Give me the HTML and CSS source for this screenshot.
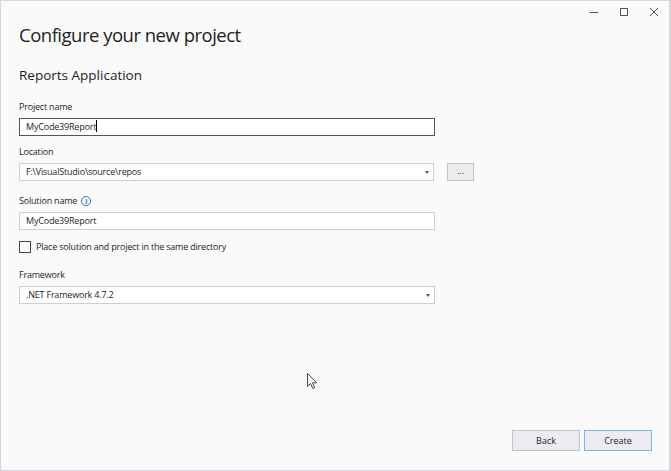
FILE: index.html
```html
<!DOCTYPE html>
<html>
<head>
<meta charset="utf-8">
<link rel="stylesheet" href="styles.css">
</head>
<body>
<div class="window">
  <div class="titlebar">
    <span class="ctl"><svg width="10" height="10" viewBox="0 0 10 10"><path d="M0.5 5.5H9.5" stroke="#555" stroke-width="1"/></svg></span>
    <span class="ctl"><svg width="10" height="10" viewBox="0 0 10 10"><rect x="1.5" y="1.5" width="7" height="7" fill="none" stroke="#555" stroke-width="1"/></svg></span>
    <span class="ctl"><svg width="10" height="10" viewBox="0 0 10 10"><path d="M1 1L9 9M9 1L1 9" stroke="#555" stroke-width="1"/></svg></span>
  </div>
  <div class="content">
    <h1 class="title">Configure your new project</h1>
    <h2 class="subtitle">Reports Application</h2>

    <div class="label l-project">Project name</div>
    <div class="field focused">MyCode39Report<span class="caret"></span></div>

    <div class="label l-loc">Location</div>
    <div class="row">
      <div class="field combo">F:\VisualStudio\source\repos<span class="arrow"></span></div>
      <div class="browse">...</div>
    </div>

    <div class="label l-sol">Solution name <span class="info">i</span></div>
    <div class="field">MyCode39Report</div>

    <label class="check"><span class="box"></span>Place solution and project in the same directory</label>

    <div class="label l-fw">Framework</div>
    <div class="field combo">.NET Framework 4.7.2<span class="arrow"></span></div>
  </div>
  <div class="footer">
    <button class="btn">Back</button>
    <button class="btn primary">Create</button>
  </div>
  <svg class="cursor" width="12" height="18" viewBox="0 0 12 18"><path d="M0.5 0.5V13.5L3.5 10.5L5.8 15.5L7.6 14.7L5.4 9.8H9.6Z" fill="#fff" stroke="#444" stroke-width="1" stroke-linejoin="round"/></svg>
</div>
</body>
</html>
```

FILE: styles.css
```css
* { box-sizing: border-box; }
html, body { margin: 0; padding: 0; }
body {
  font-family: "Open Sans", "Noto Sans", sans-serif;
  color: #1e1e1e;
  background: #fafafa;
}
.window {
  position: relative;
  width: 671px;
  height: 471px;
  border: 1px solid #d6d6dc;
  border-right-width: 2px;
  background: #fafafa;
  display: flex;
  flex-direction: column;
}
.titlebar {
  display: flex;
  justify-content: flex-end;
  height: 22px;
  padding-right: 0;
  padding-top: 5px;
}
.ctl {
  width: 30px;
  height: 12px;
  display: flex;
  justify-content: center;
  align-items: center;
}
.content {
  flex: 1;
  padding-left: 18px;
  width: 480px;
}
.title {
  font-weight: 400;
  font-size: 18.5px;
  letter-spacing: -0.5px;
  line-height: 24px;
  margin: 0;
  color: #1e1e1e;
}
.subtitle {
  font-weight: 400;
  font-size: 13.5px;
  line-height: 20px;
  margin: 18px 0 0 0;
  color: #1e1e1e;
}
.label {
  font-size: 9px;
  letter-spacing: -0.2px;
  line-height: 14px;
  margin-top: 12px;
  margin-bottom: 4px;
  display: flex;
  align-items: center;
  gap: 4px;
}
.l-project { margin-top: 15px; }
.l-loc { margin-top: 9px; }
.l-sol { margin-top: 13px; }
.l-fw { margin-top: 15px; }
.field {
  position: relative;
  width: 416px;
  height: 18px;
  background: #fff;
  border: 1px solid #cdcdd5;
  font-size: 9px;
  letter-spacing: -0.2px;
  line-height: 16px;
  padding-left: 6px;
}
.field.focused { border-color: #555; }
.caret {
  display: inline-block;
  width: 1px;
  height: 12px;
  background: #000;
  vertical-align: -2px;
}
.arrow {
  position: absolute;
  right: 4px;
  top: 7px;
  width: 0;
  height: 0;
  border-left: 2.5px solid transparent;
  border-right: 2.5px solid transparent;
  border-top: 3px solid #555;
}
.row {
  display: flex;
  align-items: flex-start;
  gap: 13px;
}
.row .field { width: 415px; }
.browse {
  width: 27px;
  height: 18px;
  border: 1px solid #c4c4c8;
  background: #ececef;
  font-size: 9px;
  line-height: 14px;
  text-align: center;
  color: #333;
}
.info {
  display: inline-flex;
  width: 10px;
  height: 10px;
  border: 1px solid #1a7ec4;
  border-radius: 50%;
  color: #1a7ec4;
  font-size: 7px;
  font-weight: 700;
  justify-content: center;
  align-items: center;
  line-height: 1;
}
.check {
  display: flex;
  align-items: center;
  gap: 5px;
  margin-top: 10px;
  font-size: 9px;
  letter-spacing: -0.2px;
  line-height: 13px;
}
.box {
  width: 12px;
  height: 12px;
  border: 1px solid #444;
  background: #fff;
}
.footer {
  display: flex;
  justify-content: flex-end;
  gap: 4px;
  padding-right: 17px;
  padding-bottom: 19px;
}
.btn {
  width: 68px;
  height: 21px;
  border: 1px solid #c4c4c8;
  background: #ececf0;
  font-family: "Open Sans", "Noto Sans", sans-serif;
  font-size: 9px;
  color: #1e1e1e;
  padding: 0;
}
.btn.primary { border-color: #7ab4ec; }
.cursor {
  position: absolute;
  left: 306px;
  top: 372px;
}
```
